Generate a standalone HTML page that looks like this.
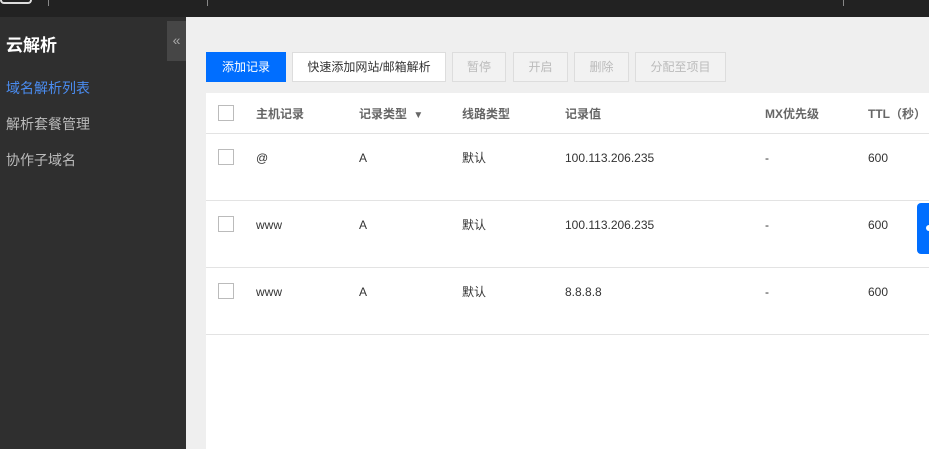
<!DOCTYPE html><html><head><meta charset="utf-8"><style>
*{margin:0;padding:0;box-sizing:border-box}
body{width:929px;height:449px;overflow:hidden;background:#efefef;font-family:"Liberation Sans","Noto Sans CJK SC",sans-serif;font-size:12px;color:#333;position:relative}
.top{position:absolute;left:0;top:0;width:929px;height:17px;background:#222}
.side{position:absolute;left:0;top:17px;width:186px;height:432px;background:#2f2f2f}
.side .t{position:absolute;left:6px;top:14px;color:#fff;font-size:17px;font-weight:bold}
.side .i{position:absolute;left:6px;color:#bbb;font-size:14px}
.col{position:absolute;left:167px;top:21px;width:19px;height:40px;background:#464646;color:#aaa;font-size:14px;text-align:center;line-height:38px}
.btn{position:absolute;top:52px;height:30px;line-height:28px;border:1px solid #ddd;text-align:center;font-size:12px;background:#f2f2f2;color:#bbb}
.tbl{position:absolute;left:206px;top:93px;width:723px;height:356px;background:#fff}
.row{position:absolute;left:0;width:723px;border-bottom:1px solid #e3e3e3}
.c{position:absolute;font-size:12px;color:#333;line-height:16px;height:16px}
.cb{position:absolute;left:12px;width:16px;height:16px;border:1px solid #bbb;background:#fff}
.h .c{color:#666;font-weight:bold}
</style></head><body>
<div class="top"><div style="position:absolute;left:48px;top:0;width:1px;height:6px;background:#888"></div><div style="position:absolute;left:207px;top:0;width:1px;height:6px;background:#888"></div><div style="position:absolute;left:843px;top:0;width:1px;height:6px;background:#888"></div><div style="position:absolute;left:0;top:0;width:32px;height:4px;border:2px solid #ddd;border-top:none;border-radius:0 0 4px 4px"></div></div>
<div class="side"><div class="t">云解析</div>
<div class="i" style="top:61px;color:#4a8cf0">域名解析列表</div>
<div class="i" style="top:97px">解析套餐管理</div>
<div class="i" style="top:133px">协作子域名</div></div>
<div class="col">«</div>
<div class="btn" style="left:206px;width:80px;background:#006eff;border-color:#006eff;color:#fff">添加记录</div>
<div class="btn" style="left:292px;width:154px;background:#fff;color:#333">快速添加网站/邮箱解析</div>
<div class="btn" style="left:452px;width:54px">暂停</div>
<div class="btn" style="left:513px;width:55px">开启</div>
<div class="btn" style="left:574px;width:55px">删除</div>
<div class="btn" style="left:635px;width:91px">分配至项目</div>
<div class="tbl">
<div class="row h" style="top:0;height:41px"><div class="cb" style="top:12px"></div>
<div class="c" style="left:50px;top:13px">主机记录</div><div class="c" style="left:153px;top:13px">记录类型 <span style="font-size:10px;margin-left:3px">▼</span></div><div class="c" style="left:256px;top:13px">线路类型</div><div class="c" style="left:359px;top:13px">记录值</div><div class="c" style="left:559px;top:13px">MX优先级</div><div class="c" style="left:662px;top:13px">TTL（秒）</div></div>
<div class="row" style="top:41px;height:67px"><div class="cb" style="top:15px"></div><div class="c" style="left:50px;top:16px">@</div><div class="c" style="left:153px;top:16px">A</div><div class="c" style="left:256px;top:16px">默认</div><div class="c" style="left:359px;top:16px">100.113.206.235</div><div class="c" style="left:559px;top:16px">-</div><div class="c" style="left:662px;top:16px">600</div></div>
<div class="row" style="top:108px;height:67px"><div class="cb" style="top:15px"></div><div class="c" style="left:50px;top:16px">www</div><div class="c" style="left:153px;top:16px">A</div><div class="c" style="left:256px;top:16px">默认</div><div class="c" style="left:359px;top:16px">100.113.206.235</div><div class="c" style="left:559px;top:16px">-</div><div class="c" style="left:662px;top:16px">600</div></div>
<div class="row" style="top:175px;height:67px"><div class="cb" style="top:15px"></div><div class="c" style="left:50px;top:16px">www</div><div class="c" style="left:153px;top:16px">A</div><div class="c" style="left:256px;top:16px">默认</div><div class="c" style="left:359px;top:16px">8.8.8.8</div><div class="c" style="left:559px;top:16px">-</div><div class="c" style="left:662px;top:16px">600</div></div>
</div>
<div style="position:absolute;left:917px;top:203px;width:20px;height:51px;background:#006eff;border-radius:4px"><div style="position:absolute;left:9px;top:22px;width:6px;height:6px;border-radius:3px;background:#fff"></div></div>
</body></html>
